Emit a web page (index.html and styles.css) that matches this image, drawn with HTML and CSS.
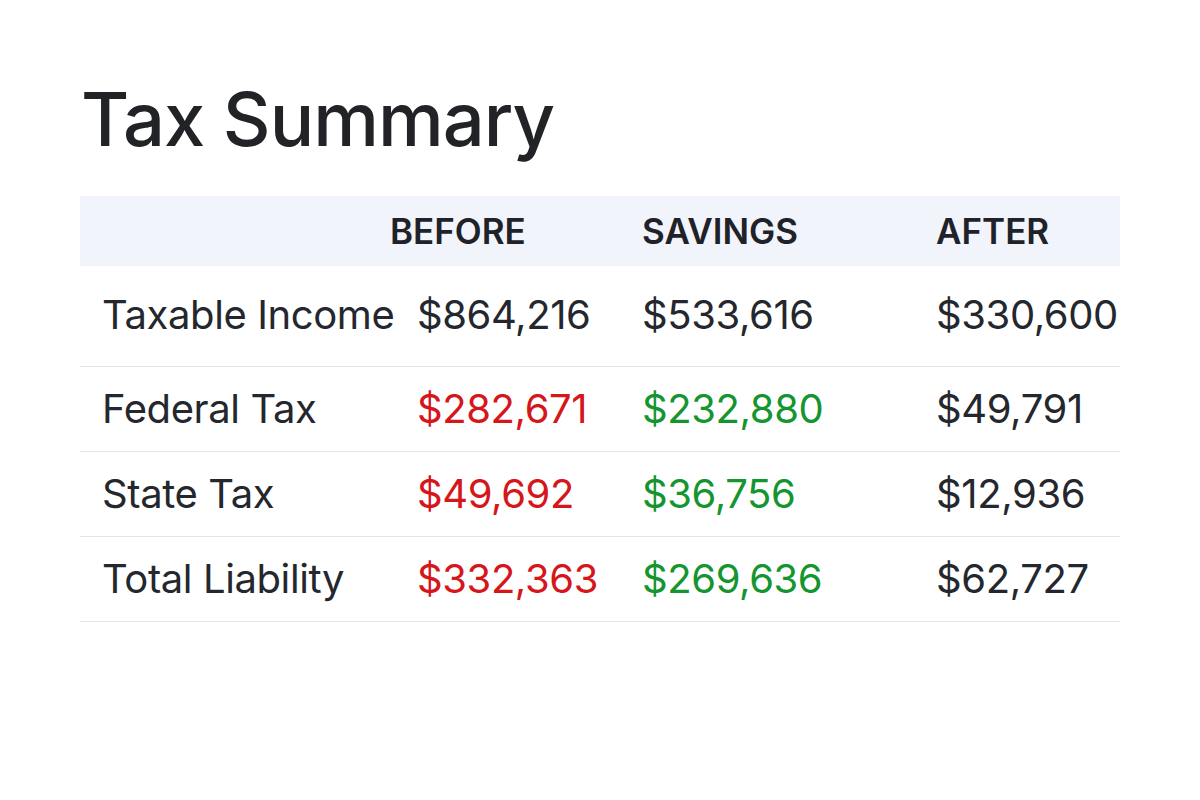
FILE: index.html
```html
<!DOCTYPE html>
<html lang="en">
<head>
<meta charset="utf-8">
<title>Tax Summary</title>
<link rel="stylesheet" href="styles.css">
</head>
<body>
<main class="page">
  <h1 class="title">Tax Summary</h1>
  <div class="table">
    <div class="row head">
      <div class="cell label"></div>
      <div class="cell before-head">BEFORE</div>
      <div class="cell">SAVINGS</div>
      <div class="cell">AFTER</div>
    </div>
    <div class="row first">
      <div class="cell label">Taxable Income</div>
      <div class="cell num">$864,216</div>
      <div class="cell num">$533,616</div>
      <div class="cell num">$330,600</div>
    </div>
    <div class="row">
      <div class="cell label">Federal Tax</div>
      <div class="cell num neg">$282,671</div>
      <div class="cell num pos">$232,880</div>
      <div class="cell num">$49,791</div>
    </div>
    <div class="row">
      <div class="cell label">State Tax</div>
      <div class="cell num neg">$49,692</div>
      <div class="cell num pos">$36,756</div>
      <div class="cell num">$12,936</div>
    </div>
    <div class="row">
      <div class="cell label">Total Liability</div>
      <div class="cell num neg">$332,363</div>
      <div class="cell num pos">$269,636</div>
      <div class="cell num">$62,727</div>
    </div>
  </div>
</main>
</body>
</html>
```

FILE: styles.css
```css
html, body {
  margin: 0;
  padding: 0;
  background: #ffffff;
}

body {
  font-family: Inter, "Noto Sans", "Liberation Sans", sans-serif;
  color: #24272d;
}

.page {
  width: 1040px;
  padding: 82px 0 0 80px;
}

.title {
  margin: 0 0 40px 1px;
  font-size: 74px;
  line-height: 74px;
  font-weight: 500;
  letter-spacing: -1px;
  color: #222326;
}

.table {
  width: 1040px;
}

.row {
  display: grid;
  grid-template-columns: 315px 225px 294px 206px;
  border-bottom: 1px solid #e4e6e9;
  padding: 18px 0;
  font-size: 40px;
  line-height: 48px;
  letter-spacing: -0.4px;
  white-space: nowrap;
}

.row.first {
  padding: 25px 0 27px;
}

.row.head {
  background: #f1f4fb;
  border-bottom: none;
  padding: 11px 0;
  font-size: 35px;
  font-weight: 600;
  line-height: 48px;
  letter-spacing: 0;
  color: #1f2228;
}

.cell {
  padding-left: 22px;
}

.num {
  letter-spacing: -0.4px;
}

.before-head {
  padding-left: 0;
  margin-left: -5px;
}

.neg {
  color: #d5161b;
}

.pos {
  color: #14952f;
}
```
